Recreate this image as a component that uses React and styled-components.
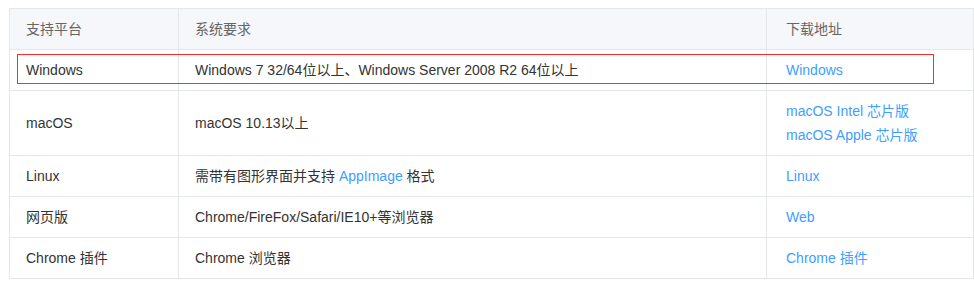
import React from 'react';
import styled, { createGlobalStyle } from 'styled-components';

const GlobalStyle = createGlobalStyle`
    body {
        margin: 0;
        background: #fff;
        font-family: "Liberation Sans", Arial, "Noto Sans CJK SC", sans-serif;
        font-size: 14px;
        color: #333;
    }
`;

const Page = styled.div`
    padding: 8px 0 0 9px;
`;

const Table = styled.div`
    width: 965px;
    box-sizing: border-box;
    border: 1px solid #e4e7ed;
`;

const Row = styled.div`
    position: relative;
    display: grid;
    grid-template-columns: 168px 588px 1fr;
    background: ${props => props.head ? '#f5f7fa' : '#fff'};
    color: ${props => props.head ? '#666' : '#333'};
    & + & {
        border-top: 1px solid #e4e7ed;
    }
`;

const Cell = styled.div`
    box-sizing: border-box;
    padding: 8px 0 8px ${props => props.link ? '19px' : '16px'};
    line-height: 24px;
    display: flex;
    flex-direction: column;
    justify-content: center;
    & + & {
        border-left: 1px solid #e4e7ed;
    }
`;

const Link = styled.a`
    color: #409eff;
    text-decoration: none;
    cursor: pointer;
`;

// red frame drawn over the Windows row
const Highlight = styled.div`
    position: absolute;
    left: 7px;
    top: 4px;
    width: 917px;
    height: 30px;
    box-sizing: border-box;
    border: 1px solid #ff2b2b;
    pointer-events: none;
`;

const rows = [
    {
        platform: 'Windows',
        system: 'Windows 7 32/64位以上、Windows Server 2008 R2 64位以上',
        links: ['Windows'],
        marked: true,
    },
    {
        platform: 'macOS',
        system: 'macOS 10.13以上',
        links: ['macOS Intel 芯片版', 'macOS Apple 芯片版'],
    },
    {
        platform: 'Linux',
        system: <span>需带有图形界面并支持 <Link>AppImage</Link> 格式</span>,
        links: ['Linux'],
    },
    {
        platform: '网页版',
        system: 'Chrome/FireFox/Safari/IE10+等浏览器',
        links: ['Web'],
    },
    {
        platform: 'Chrome 插件',
        system: 'Chrome 浏览器',
        links: ['Chrome 插件'],
    },
];

export default function App() {
    return (
        <Page>
            <GlobalStyle />
            <Table>
                <Row head>
                    <Cell>支持平台</Cell>
                    <Cell>系统要求</Cell>
                    <Cell link>下载地址</Cell>
                </Row>
                {rows.map((row, index) => (
                    <Row key={index}>
                        <Cell>{row.platform}</Cell>
                        <Cell>{row.system}</Cell>
                        <Cell link>
                            {row.links.map(l => <Link key={l}>{l}</Link>)}
                        </Cell>
                        {row.marked && <Highlight />}
                    </Row>
                ))}
            </Table>
        </Page>
    );
}
